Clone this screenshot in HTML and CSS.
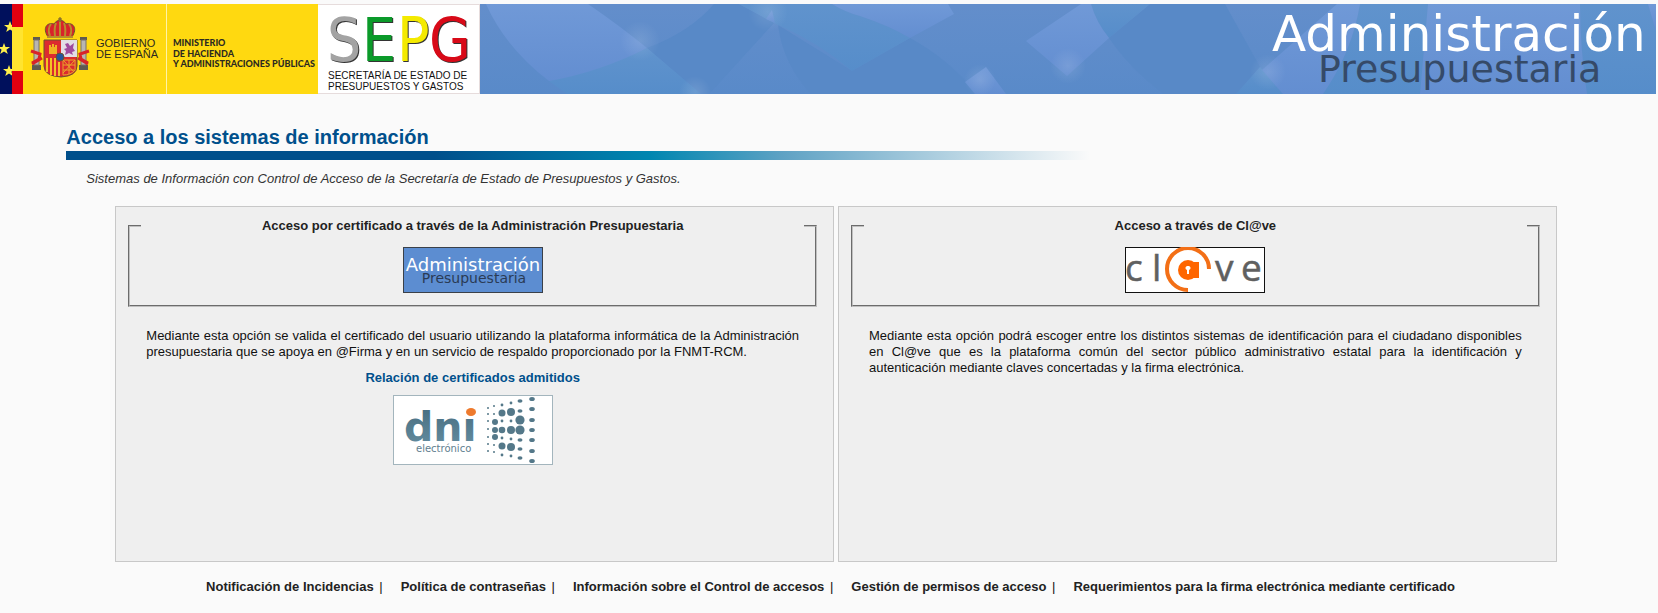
FILE: index.html
```html
<!DOCTYPE html>
<html lang="es">
<head>
<meta charset="utf-8">
<title>Acceso a los sistemas de información</title>
<link rel="stylesheet" href="styles.css">
</head>
<body>
<header class="banner">
  <svg class="logos" viewBox="0 0 480 90" role="img" aria-label="Gobierno de España, Ministerio de Hacienda y Administraciones Públicas, SEPG">
    <defs>
      <g id="pillar">
        <path d="M1 0h7v3H1zM0 28h9v5H0z" fill="#5f5a50"/>
        <path d="M2 3h5v25H2z" fill="#b9b6b0" stroke="#77706b"/>
      </g>
      <path id="star" d="M0-6 1.5-2H6L2.4.8 3.8 5 0 2.4-3.8 5-2.4.8-6-2h4.5z" fill="#fff04a"/>
    </defs>
    <rect width="318" height="90" fill="#ffd910"/>
    <rect width="12" height="90" fill="#00105c"/>
    <rect x="12" width="11" height="90" fill="#e1000f"/>
    <rect x="12" y="23" width="11" height="44" fill="#ffe430"/>
    <svg width="12" height="90">
      <use href="#star" x="10" y="23"/><use href="#star" x="4" y="45"/><use href="#star" x="9" y="67"/>
    </svg>
    <use href="#pillar" x="32" y="33"/>
    <use href="#pillar" x="79" y="33"/>
    <path d="M31 47l9 3-1 5-7 4M89 47l-9 3 1 5 7 4M32 60l10-6M88 60l-10-6" fill="none" stroke="#d8232a" stroke-width="3"/>
    <path d="M48 33C42 24 47 18 54 20 57 15 63 15 66 20 73 18 78 24 72 33Z" fill="#d8232a" stroke="#6b5330"/>
    <path d="M50 32Q47 25 51 20M55 32Q54 24 56 19M60 32V16M65 32Q66 24 64 19M70 32Q73 25 69 20M47 33H73" fill="none" stroke="#b98c2c" stroke-width="2"/>
    <path d="M60 13v5M58 15h4" stroke="#6b5330"/>
    <path d="M44 36H77V62Q77 72 61 73 44 72 44 62Z" fill="#dc2b2f" stroke="#6b5330"/>
    <path d="M61 36H77V53H61Z" fill="#e2dde6"/>
    <path d="M49 50v-9h2v2h1v-3h2v3h1v-2h2v9z" fill="#f0b323"/>
    <path d="M65 40l3-1 2 3 4-3-1 5 2 3-3 1 1 3-4-2-4 2 1-4-2-2 3-1z" fill="#a04a9f"/>
    <path d="M47 54v14M51 54v17M55 54v18M59 58v14" stroke="#f3c326" stroke-width="2"/>
    <path d="M63 56h12v10q-4 5-12 5zM63 61h12M63 66h11M69 56v14M63 56l11 12M75 56l-12 13" fill="none" stroke="#e9a52a"/>
    <circle cx="60" cy="53" r="4" fill="#23569c" stroke="#6b5330"/>
    <g font-family="Liberation Sans, sans-serif" font-size="11" fill="#2c2a20">
      <text x="96" y="43">GOBIERNO</text>
      <text x="96" y="54">DE ESPAÑA</text>
    </g>
    <path d="M166.500 0v90" stroke="#fff3a6"/>
    <g font-family="Lato, sans-serif" font-size="9" font-weight="900" fill="#2c2a20">
      <text x="173" y="42">MINISTERIO</text>
      <text x="173" y="53">DE HACIENDA</text>
      <text x="173" y="63">Y ADMINISTRACIONES PÚBLICAS</text>
    </g>
    <rect x="318" width="162" height="90" fill="#e6dcdc"/>
    <rect x="318" y="1" width="161" height="88" fill="#fff"/>
    <g class="sepg" font-family="DejaVu Sans Condensed, DejaVu Sans, sans-serif" font-size="60">
      <text x="327" y="57" fill="#a3a3a3">S</text>
      <text x="362" y="57" fill="#0b9a2a">E</text>
      <text x="397" y="57" fill="#f4ea00">P</text>
      <text x="429" y="57" fill="#d80a18">G</text>
    </g>
    <g font-family="Liberation Sans, sans-serif" font-size="10" fill="#111">
      <text x="328" y="75">SECRETARÍA DE ESTADO DE</text>
      <text x="328" y="86">PRESUPUESTOS Y GASTOS</text>
    </g>
  </svg>
  <svg class="masthead" viewBox="0 0 1176 90" preserveAspectRatio="xMaxYMid slice" role="img" aria-label="Administración Presupuestaria">
    <defs>
      <linearGradient id="base" x2="0" y2="1"><stop stop-color="#638ecb"/><stop offset="1" stop-color="#598ac9"/></linearGradient>
      <linearGradient id="light" x2="0" y2="1"><stop stop-color="#7099d7"/><stop offset="1" stop-color="#638ed1"/></linearGradient>
      <linearGradient id="teal" x2="0" y2="1"><stop stop-color="#6093cd"/><stop offset="1" stop-color="#568dca"/></linearGradient>
      <radialGradient id="glow"><stop stop-color="#fff" stop-opacity=".12"/><stop offset="1" stop-color="#fff" stop-opacity="0"/></radialGradient>
    </defs>
    <rect width="1176" height="90" fill="url(#base)"/>
    <g fill="#5889c7">
      <path d="M234 0H259L294 19 229 90H221L167 44Q210 28 234 0Z"/>
      <path d="M298 21L372 67 430 34Q470 56 497 90H331Q303 60 298 21Z"/>
      <path d="M670 0H745L780 63 756 90H684Q650 65 629 34Z"/>
    </g>
    <g fill="url(#teal)">
      <path d="M167 44L221 90H87L69 77Q125 64 167 44Z"/>
      <path d="M259 0H352Q365 8 380 12 410 22 430 34L372 67Q338 38 298 21Z"/>
      <path d="M611 0H670L629 34Q616 18 611 0Z"/>
      <path d="M780 63L756 90H803Z"/>
      <path d="M880 0H948L940 90H843Q872 48 880 0Z"/>
      <path d="M1100 0H1168L1176 27V90H1107Q1100 45 1100 0Z"/>
    </g>
    <g fill="url(#light)">
      <path d="M6 0H108Q140 22 167 44 120 68 69 77 25 43 6 0Z"/>
      <path d="M352 0H468L474 10 430 34Q410 22 380 12 365 8 352 0Z"/>
      <path d="M292 6L295 19 286 15Z"/>
      <path d="M506 63L526 90H495L485 78Z"/>
      <path d="M601 0H611Q616 18 629 34L587 72 546 37Z"/>
      <path d="M857 0H880Q872 48 843 90H803L782 66Z"/>
      <path d="M948 0H1100Q1100 45 1107 90H940Z"/>
      <path d="M1168 0H1176V27Z"/>
    </g>
    <g fill="url(#glow)">
      <circle cx="160" cy="37" r="20"/><circle cx="288" cy="8" r="20"/><circle cx="215" cy="88" r="16"/>
      <circle cx="500" cy="76" r="16"/><circle cx="588" cy="62" r="18"/><circle cx="788" cy="68" r="18"/>
    </g>
    <g font-family="DejaVu Sans, sans-serif">
      <text x="792" y="47" font-size="50" fill="#fff">Administración</text>
      <text x="838" y="78" font-size="38" fill="#354a68">Presupuestaria</text>
    </g>
  </svg>
</header>

<main class="content">
  <h1 class="title">Acceso a los sistemas de información</h1>
  <div class="rule"></div>
  <p class="intro">Sistemas de Información con Control de Acceso de la Secretaría de Estado de Presupuestos y Gastos.</p>

  <div class="panels">
    <section class="panel">
      <fieldset class="access">
        <legend class="access-name">Acceso por certificado a través de la Administración Presupuestaria</legend>
        <a class="access-link" href="#certificado">
          <svg width="140" height="46" viewBox="0 0 140 46" role="img" aria-label="Administración Presupuestaria">
            <rect x=".5" y=".5" width="139" height="45" fill="#5c8dd1" stroke="#3a4048"/>
            <g font-family="DejaVu Sans, sans-serif" text-anchor="middle">
              <text x="70" y="24" font-size="18" fill="#fff">Administración</text>
              <text x="71" y="36" font-size="14" fill="#2a3b55">Presupuestaria</text>
            </g>
          </svg>
        </a>
      </fieldset>
      <p class="description">Mediante esta opción se valida el certificado del usuario utilizando la plataforma informática de la Administración presupuestaria que se apoya en @Firma y en un servicio de respaldo proporcionado por la FNMT-RCM.</p>
      <a class="certificates" href="#relacion">Relación de certificados admitidos</a>
      <a class="dni" href="#dni">
        <svg width="160" height="70" viewBox="0 0 160 70" role="img" aria-label="DNI electrónico">
          <defs><linearGradient id="steel" x2="0" y2="1"><stop stop-color="#456a7d"/><stop offset="1" stop-color="#6690a3"/></linearGradient></defs>
          <rect x=".5" y=".5" width="159" height="69" fill="#fff" stroke="#a3b5bd"/>
          <g font-family="DejaVu Sans, sans-serif">
            <text x="11" y="46" font-size="41" font-weight="700" fill="url(#steel)">dni</text>
            <text x="23" y="57" font-size="10" fill="#5f8090">electrónico</text>
          </g>
          <rect x="70" y="12" width="16" height="10" fill="#fff"/>
          <ellipse cx="78" cy="17" rx="5" ry="4" fill="#ee7a2d"/>
          <g fill="#547889">
            <circle cx="95" cy="13" r="1"/><circle cx="95" cy="19" r="1"/><circle cx="95" cy="26" r="1"/><circle cx="95" cy="34" r="1"/><circle cx="95" cy="42" r="1"/><circle cx="95" cy="49" r="1"/><circle cx="95" cy="56" r="1"/>
            <circle cx="101" cy="11" r="1"/><circle cx="101" cy="19" r="1"/><circle cx="102" cy="27" r="3"/><circle cx="102" cy="35" r="3"/><circle cx="102" cy="42" r="3"/><circle cx="101" cy="50" r="1"/><circle cx="101" cy="57" r="1"/>
            <circle cx="109" cy="10" r="1.400"/><circle cx="109" cy="18" r="3.500"/><circle cx="109" cy="26" r="1.400"/><circle cx="109" cy="35" r="3.300"/><circle cx="109" cy="43" r="1.400"/><circle cx="109" cy="51" r="3.500"/><circle cx="109" cy="60" r="1.400"/>
            <circle cx="118" cy="8" r="1.400"/><circle cx="118" cy="17" r="4"/><circle cx="118" cy="26" r="1.400"/><circle cx="118" cy="35" r="4"/><circle cx="118" cy="44" r="1.400"/><circle cx="118" cy="52" r="4"/><circle cx="118" cy="61" r="1.400"/>
            <ellipse cx="127" cy="6" rx="2.500" ry="1.800"/><ellipse cx="127" cy="16" rx="2.500" ry="1.800"/><circle cx="127" cy="25" r="4.600"/><circle cx="127" cy="35" r="4.600"/><ellipse cx="127" cy="45" rx="2.500" ry="1.800"/><ellipse cx="127" cy="54" rx="2.500" ry="1.800"/><ellipse cx="127" cy="63" rx="2.500" ry="1.800"/>
            <ellipse cx="139" cy="4" rx="2.800" ry="2"/><ellipse cx="139" cy="14" rx="2.800" ry="2"/><ellipse cx="139" cy="25" rx="2.800" ry="2"/><ellipse cx="139" cy="35" rx="2.800" ry="2"/><ellipse cx="139" cy="45" rx="2.800" ry="2"/><ellipse cx="139" cy="56" rx="2.800" ry="2"/><ellipse cx="139" cy="66" rx="2.800" ry="2"/>
          </g>
        </svg>
      </a>
    </section>

    <section class="panel">
      <fieldset class="access">
        <legend class="access-name">Acceso a través de Cl@ve</legend>
        <a class="access-link" href="#clave">
          <svg width="140" height="46" viewBox="0 0 140 46" role="img" aria-label="Cl@ve">
            <rect x=".5" y=".5" width="139" height="45" fill="#fff" stroke="#111"/>
            <g font-family="Open Sans, sans-serif" font-size="37" fill="#606060" stroke="#606060" stroke-width=".5">
              <text x="0" y="34">c</text>
              <text x="27" y="34">l</text>
              <text x="90" y="34">v</text>
              <text x="116" y="34">e</text>
            </g>
            <path d="M84 22A21 21 0 1 0 63 43" fill="none" stroke="#f36f16" stroke-width="4"/>
            <circle cx="63" cy="23" r="10" fill="#ff6600"/>
            <path d="M68 15h6v16h-6z" fill="#ff6600"/>
            <path d="M63 19a2 2 0 0 1 1 4v4h-2v-4a2 2 0 0 1 1-4z" fill="#fff"/>
          </svg>
        </a>
      </fieldset>
      <p class="description">Mediante esta opción podrá escoger entre los distintos sistemas de identificación para el ciudadano disponibles en Cl@ve que es la plataforma común del sector público administrativo estatal para la identificación y autenticación mediante claves concertadas y la firma electrónica.</p>
    </section>
  </div>
</main>

<footer>
  <ul class="links">
    <li><a href="#incidencias">Notificación de Incidencias</a> |</li>
    <li><a href="#contrasenas">Política de contraseñas</a> |</li>
    <li><a href="#control">Información sobre el Control de accesos</a> |</li>
    <li><a href="#permisos">Gestión de permisos de acceso</a> |</li>
    <li><a href="#requerimientos">Requerimientos para la firma electrónica mediante certificado</a></li>
  </ul>
</footer>
</body>
</html>
```
FILE: styles.css
```css
body {
  margin: 0;
  background: #fafafa;
  color: #111;
  font: 13px/16px "Liberation Sans", Arial, sans-serif;
}

a {
  color: inherit;
  text-decoration: none;
}

.banner {
  display: flex;
  padding: 4px 2px 0 0;
}

.logos {
  flex: none;
  width: 480px;
  height: 90px;
}

.sepg text {
  filter: drop-shadow(1px 1px 0 #333);
}

.masthead {
  flex: 1;
  min-width: 0;
  height: 90px;
}

.content {
  padding: 31px 4% 0;
}

.title {
  margin: 0;
  color: #00508c;
  font-size: 20px;
  line-height: 24px;
}

.rule {
  max-width: 1024px;
  height: 9px;
  margin-top: 2px;
  background: linear-gradient(to right, #004f8b 36%, #0086b0 57%, #5fa2c4 70%, #fafafa);
}

.intro {
  margin: 11px 20px 0;
  color: #333;
  font-style: italic;
}

.panels {
  display: grid;
  grid-template-columns: 1fr 1fr;
  gap: 4px;
  margin: 19px 35px 0 49px;
}

.panel {
  box-sizing: border-box;
  min-height: 356px;
  padding: 11px 16px 16px 12px;
  border: 1px solid #c8c8c8;
  background: #efefef;
  text-align: center;
}

.access {
  margin: 0;
  padding: 0 11px 12px;
  border: 2px groove #c0c0c0;
}

.access-name {
  box-sizing: border-box;
  width: 100%;
  padding: 0;
  color: #222;
  font-weight: 700;
}

.access-link,
.dni {
  display: block;
}

.access-link {
  margin-top: 13px;
}

.access-link svg,
.dni svg {
  display: block;
  margin: 0 auto;
}

.description {
  margin: 21px 18px 0;
  text-align: justify;
}

.certificates {
  display: block;
  margin: 10px 0 9px;
  color: #00508c;
  font-weight: 700;
}

.links {
  display: flex;
  flex-wrap: wrap;
  justify-content: center;
  gap: 4px 18px;
  margin: 17px 0;
  padding: 0 0 0 5px;
  list-style: none;
}

.links a {
  margin-right: 2px;
  color: #222;
  font-weight: 700;
}
```
